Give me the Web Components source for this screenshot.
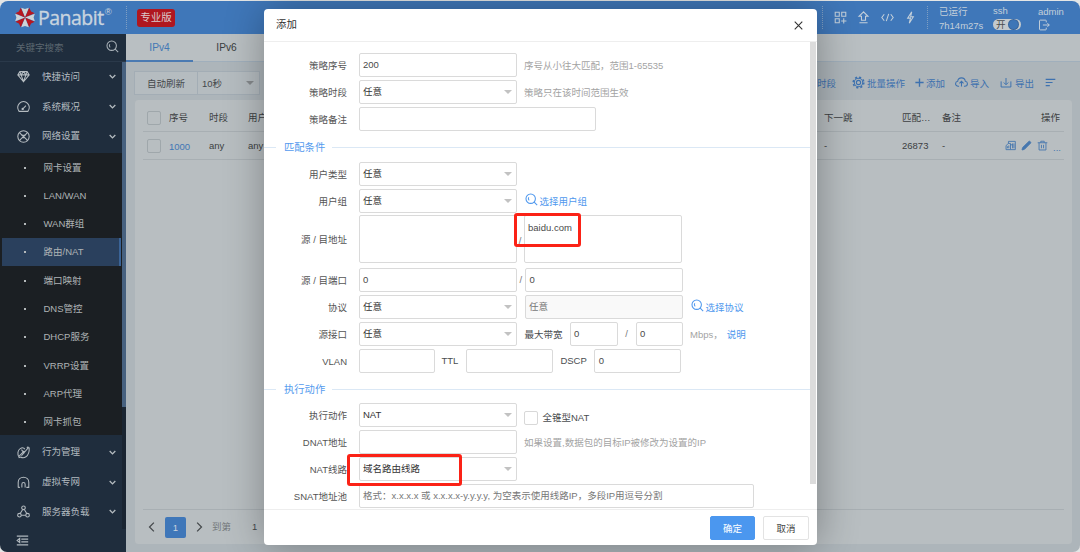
<!DOCTYPE html>
<html lang="zh-CN">
<head>
<meta charset="utf-8">
<title>Panabit</title>
<style>
  html, body { margin: 0; padding: 0; }
  body {
    width: 1080px;
    height: 552px;
    overflow: hidden;
    background: #e4e6e6;
    font: 9.5px/14px "Liberation Sans", "Noto Sans CJK SC", sans-serif;
    color: #4a4d50;
  }
</style>
</head>
<body>
<panabit-app></panabit-app>

<script>
const ICONS = {
  search: '<circle cx="7" cy="7" r="5.8"/><path d="M11.300 11.300l3.700 3.700M4.600 5.200c-.8 1.400-.5 3 .6 4"/>',
  gem: '<path d="M3.5 2h9L15 6l-7 8.5L1 6zM1 6h14M5 6l3 8 3-8M3.5 2L5 6l3-4 3 4 1.5-4"/>',
  gauge: '<path d="M2.600 14C.4 11 .5 7 3 4.200c2.800-3 7.200-3 10 0 2.500 2.800 2.600 6.800.4 9.800zM7.500 10.500L11 7"/><circle cx="7" cy="11" r=".8"/>',
  net: '<circle cx="8" cy="8" r="7"/><path d="M3 3.200l2.500 2.600 5 4.600L13 13M13 3l-2.500 2.800-5 4.600L3 13M6 6.500h4M6 9.500h4" /><path d="M5.500 5.800L8 8l2.500-2.200"/>',
  behave: '<path d="M2.500 13.500C0 10 1 5 4 3.200 7 1.400 9 2.500 9.500 4M5.500 4.500L9 9M5.500 12L14 2l1 .3c.3 5-1.200 9-4 11-2.500 1.700-5 1.200-6.500.2L2 14.500M2 13L9 6M12 2l2-1"/>',
  vpn: '<path d="M1.500 14V7.800C1.500 4 4.300 1.500 8 1.500S14.500 4 14.500 7.800V14h-3M1.500 14h2M6 14v-3.800C6 8.800 6.800 8 8 8s2 .8 2 2.200V14"/>',
  nodes: '<circle cx="8" cy="3.500" r="2.200"/><circle cx="3" cy="12.500" r="2.200"/><circle cx="13" cy="12.500" r="2.200"/><path d="M7 5.500L4 10.500M9 5.500l3 5M5.200 12.500h5.600"/>',
  down: '<path d="M3 5.500l5 5 5-5"/>',
  left: '<path d="M11 1L4 8l7 7"/>',
  right: '<path d="M5 1l7 7-7 7"/>',
  close: '<path d="M2.500 2.500l11 11M13.500 2.500l-11 11"/>',
  fold: '<path d="M1 2.500h14M6.500 6.200H15M6.500 9.800H15M1 13.500h14M4.500 5.500L1.500 8l3 2.500z"/>',
  grid: '<path d="M1.500 1.500h5v5h-5zM9.500 1.500h5v5h-5zM1.500 9.500h5v5h-5zM12 9v6.500M8.800 12.200h6.500"/>',
  upload: '<path d="M8 1L2.500 6.500H5.500V11.500h5V6.500h3zM3 14.500h10"/>',
  code: '<path d="M4 4L1 8l3 4M12 4l3 4-3 4M9.500 3.500l-3 9"/>',
  bolt: '<path d="M9.500 1L4.500 8.800h3.500L6.500 15l5-8H8.200z"/>',
  logout: '<path d="M11 4.500V2.500C11 1.800 10.700 1.500 10 1.500H3C2.300 1.500 2 1.800 2 2.500v11c0 .7.300 1 1 1h7c.7 0 1-.3 1-1v-2M6.500 8h8.500M12.500 5.500L15 8l-2.500 2.500"/>',
  gear: '<circle cx="8" cy="8" r="2.600"/><circle cx="8" cy="8" r="5.200"/><circle cx="8" cy="8" r="6.600" stroke-width="1.800" stroke-dasharray="2.600 2.584"/>',
  plus: '<path d="M8 2v12M2 8h12" stroke-width="2"/>',
  cloud: '<path d="M5 12.500H4c-2 0-3.300-1.400-3.300-3.100S2 6.600 3.300 6.400C3.600 4 5.500 2.300 8 2.300s4.400 1.700 4.700 4.100c1.500.2 2.600 1.400 2.600 3s-1.300 3.100-3.300 3.100h-1M8 13V7M5.500 9L8 6.500 10.500 9"/>',
  export: '<path d="M1.500 6.500v7.500h13V6.500M8 2v8.500M5 8l3 3 3-3"/>',
  lines: '<path d="M1 3.500h14M1 8h10M1 12.500h6" stroke-width="1.700"/>',
  log: '<path d="M5 4.500V2h10v12H8M1.500 14V8.500L4.500 5H8v9zM3.500 9v3M5.500 8v4M11 5v7M13 5v7M8 7h3"/>',
  edit: '<path d="M1.500 14.500l.8-3.500L11.500 2c1-1 3.500 1.300 2.500 2.500L5 13.600z" fill="currentColor"/>',
  trash: '<path d="M1 4h14M5.500 4V1.800h5V4M3 4v10.500h10V4M6.500 7v5M9.500 7v5"/>'
};

function define(name, css, html) {
  customElements.define(name, class extends HTMLElement {
    connectedCallback() {
      if (this.shadowRoot) return;
      const root = this.attachShadow({ mode: "open" });
      const body = typeof html === "function" ? html(this) : html;
      root.innerHTML = `<style>* { box-sizing: border-box; } ${css}</style>${body}`;
    }
  });
}

define("ui-icon", `
  :host { display: inline-block; flex: none; width: 13px; height: 13px; }
  svg { display: block; width: 100%; height: 100%; fill: none; stroke: currentColor; overflow: visible; }
`, el => `<svg viewBox="0 0 16 16" stroke-width="${el.getAttribute("weight") || 1.3}">${ICONS[el.getAttribute("name")]}</svg>`);

/* ---------- header ---------- */

define("app-logo", `
  :host { display: flex; align-items: center; color: #c8d4df; }
  svg { width: 22px; height: 23px; }
  b { margin-left: 2px; font: 400 19.500px/24px "Open Sans", "Noto Sans", sans-serif; letter-spacing: -.5px; -webkit-text-stroke: .35px #c8d4df; }
  sup { align-self: flex-start; margin: 1px 0 0 1px; font-size: 9.500px; line-height: 10px; }
`, () => {
  let blades = "";
  for (let i = 0; i < 8; i++) {
    blades += `<path fill="${i % 2 ? "#b8171f" : "#ced3d6"}" transform="rotate(${i * 45} 12 12)" d="M12 12L7.800 1.300 12 2.600l4.200-1.300z"/>`;
  }
  return `<svg viewBox="0 0 24 24">${blades}</svg><b>Panabit</b><sup>®</sup>`;
});

define("ui-switch", `
  :host { display: flex; align-items: center; box-sizing: border-box; width: 28px; height: 11px; border-radius: 6px; background: #c5cacd; color: #4a4d50; font-size: 9.500px; line-height: 11px; }
  span { margin-left: 3px; }
  i { flex: none; margin-left: auto; width: 9px; height: 9px; margin-right: 3px; border-radius: 50%; background: #3e76b7; box-shadow: 0 0 0 1px #38659c; }
`, `<span><slot></slot></span><i></i>`);

define("app-header", `
  :host { display: flex; align-items: center; height: 33px; background: #3f77b9; color: #c3cfda; border-radius: 8px 8px 0 0; }
  app-logo { width: 112px; margin-left: 14px; }
  .dots { width: 0; height: 23px; border-left: 1px dotted #7f9fc3; }
  .badge { margin-left: 10px; width: 38px; height: 18px; border-radius: 3px; background: #b0171f; color: #d9c9cb; font-size: 10.500px; line-height: 17px; text-align: center; }
  .right { display: flex; align-items: center; margin-left: auto; height: 100%; }
  .icons { display: flex; gap: 10.300px; margin: 0 10px 0 11px; }
  .col { width: 54px; line-height: 14px; white-space: nowrap; }
  ui-switch { margin-top: 1px; }
  .col ui-icon { display: block; width: 12px; height: 12px; margin: 0 0 0; }
`, `
  <app-logo></app-logo>
  <span class="dots"></span>
  <span class="badge">专业版</span>
  <div class="right">
    <span class="dots"></span>
    <div class="icons">
      <ui-icon name="grid"></ui-icon><ui-icon name="upload"></ui-icon>
      <ui-icon name="code"></ui-icon><ui-icon name="bolt"></ui-icon>
    </div>
    <span class="dots"></span>
    <div class="col" style="margin-left:11px;margin-top:2px">已运行<br>7h14m27s</div>
    <div class="col" style="width:45px;margin-top:-1px">ssh<ui-switch>开</ui-switch></div>
    <div class="col" style="width:42px;margin-top:1px">admin<ui-icon name="logout"></ui-icon></div>
  </div>
`);

/* ---------- sidebar ---------- */

define("menu-item", `
  :host { display: flex; align-items: center; height: 29.800px; padding: 0 5px 0 17px; color: #b4bbc0; }
  span { flex: 1; margin-left: 12px; }
  .arrow { width: 9px; height: 9px; }
`, el => `<ui-icon name="${el.getAttribute("icon")}"></ui-icon><span><slot></slot></span><ui-icon class="arrow" name="down" weight="2.4"></ui-icon>`);

define("sub-item", `
  :host { display: flex; align-items: center; height: 28.300px; padding-left: 24px; color: #aeb3b5; }
  :host([active]) { height: 27.300px; margin: 0 1px 1px 2px; padding-left: 22px; background: #2a405d; border-right: 2px solid #3a6396; }
  i { width: 2px; height: 2px; margin-right: 17.500px; background: #b4b9bb; }
`, `<i></i><slot></slot>`);

define("app-sidebar", `
  :host { display: flex; flex-direction: column; width: 126px; flex: none; background: #1f2d3d; border-radius: 0 0 0 7px; overflow: hidden; }
  .search { display: flex; align-items: center; height: 28px; padding: 0 7px 0 16px; border-bottom: 1px solid #2a394a; color: #5c6770; }
  .search ui-icon { margin: -3px 0 0 auto; color: #a7b0b7; }
  .body { display: flex; height: 467px; }
  nav { width: 121.500px; }
  .sub { height: 282px; margin-top: 2px; margin-bottom: 2px; background: #1b1f23; overflow: hidden; }
  .bar { flex: 1; background: #1a2532; }
  .bar i { display: block; height: 345px; background: #47617f; }
  .fold { margin: 5px 0 0 16px; color: #b0b8be; }
`, `
  <div class="search">关键字搜索<ui-icon name="search"></ui-icon></div>
  <div class="body">
    <nav>
      <menu-item icon="gem">快捷访问</menu-item>
      <menu-item icon="gauge">系统概况</menu-item>
      <menu-item icon="net">网络设置</menu-item>
      <div class="sub">
        <sub-item>网卡设置</sub-item>
        <sub-item>LAN/WAN</sub-item>
        <sub-item>WAN群组</sub-item>
        <sub-item active>路由/NAT</sub-item>
        <sub-item>端口映射</sub-item>
        <sub-item>DNS管控</sub-item>
        <sub-item>DHCP服务</sub-item>
        <sub-item>VRRP设置</sub-item>
        <sub-item>ARP代理</sub-item>
        <sub-item>网卡抓包</sub-item>
      </div>
      <menu-item icon="behave">行为管理</menu-item>
      <menu-item icon="vpn">虚拟专网</menu-item>
      <menu-item icon="nodes">服务器负载</menu-item>
    </nav>
    <div class="bar"><i></i></div>
  </div>
  <ui-icon class="fold" name="fold" weight="1.5"></ui-icon>
`);

/* ---------- page behind the dialog ---------- */

define("app-tabs", `
  :host { display: flex; height: 28px; background: #b9bfc2; border-bottom: 1px solid #a0afbc; font-size: 10.200px; line-height: 28px; text-align: center; color: #3a3d40; }
  span { width: 67px; height: 28px; }
  .on { color: #4277b5; border-bottom: 2px solid #4a7ab2; }
`, `<span class="on">IPv4</span><span>IPv6</span>`);

define("app-toolbar", `
  :host { display: flex; align-items: center; height: 24px; color: #3d71af; }
  .refresh { display: flex; width: 126px; height: 24px; border: 1px solid #a3adb5; background: #b5bcc0; color: #45494c; line-height: 23px; }
  .refresh span { width: 63px; padding-left: 12px; border-right: 1px solid #a3adb5; }
  .refresh b { flex: 1; padding-left: 4px; font-weight: 400; }
  .refresh i { margin: 9px 5px 0 0; height: 0; border: 4.500px solid transparent; border-top-color: #85898c; border-bottom: 0; }
  .acts { display: flex; align-items: center; margin-left: auto; padding-right: 18px; white-space: nowrap; }
  .acts ui-icon { margin: -3px 2px 0 0; }
  .acts span { display: flex; align-items: center; margin: 2px 0 0 11px; }
`, `
  <div class="refresh"><span>自动刷新</span><b>10秒</b><i></i></div>
  <div class="acts">
    <span>时段</span>
    <span style="margin-left:16px"><ui-icon name="gear"></ui-icon>批量操作</span>
    <span style="margin-left:9px"><ui-icon name="plus" style="width:11px;height:11px;margin-right:1px"></ui-icon>添加</span>
    <span style="margin-left:10px"><ui-icon name="cloud"></ui-icon>导入</span>
    <span><ui-icon name="export" style="width:12px;margin-right:3px"></ui-icon>导出</span>
    <span><ui-icon name="lines" style="width:11px;height:11px;margin-right:-1px"></ui-icon></span>
  </div>
`);

define("ui-check", `
  :host { display: block; width: 14px; height: 14px; border: 1px solid var(--line, #9fa7ab); border-radius: 2px; box-sizing: border-box; }
`, ``);

define("policy-table", `
  :host { display: flex; flex-direction: column; flex: 1; padding: 4px 8px 0; border: 1px solid #adb5ba; border-radius: 4px; background: #b8bec1; color: #3c3f42; }
  .row { display: grid; grid-template-columns: 22px 40px 39px 576px 78px 40px 50px 1fr; align-items: center; height: 28px; padding: 0 4px; border-bottom: 1px solid #a8afb3; white-space: nowrap; }
  .row:first-child span { padding-top: 1px; }
  .row > :last-child { justify-self: end; }
  .ops { display: flex; align-items: center; gap: 4px; margin-right: -1px; color: #4576ae; }
  .ops ui-icon { width: 11px; height: 11px; margin-right: 1px; }
  a { color: #4277b5; padding-top: 2px; }
  .pager { display: flex; align-items: center; height: 35px; margin-top: auto; border-top: 1px solid #a8afb3; color: #45494c; }
  .pager ui-icon { width: 10px; height: 10px; }
  .pager b { width: 21px; height: 21px; margin: 0 8px; border-radius: 2px; background: #3f77b9; color: #c9d4df; font-weight: 400; line-height: 21px; text-align: center; }
  .pager em { margin: 0 21px 0 8px; font-style: normal; color: #74797c; }
`, `
  <div class="row"><ui-check></ui-check><span>序号</span><span>时段</span><span>用户</span><span>下一跳</span><span>匹配…</span><span>备注</span><span>操作</span></div>
  <div class="row"><ui-check></ui-check><a>1000</a><span>any</span><span>any</span><span>-</span><span>26873</span><span>-</span>
    <div class="ops"><ui-icon name="log"></ui-icon><ui-icon name="edit"></ui-icon><ui-icon name="trash"></ui-icon><span style="margin-top:4px">...</span></div></div>
  <div class="pager"><ui-icon name="left" weight="2" style="margin-left:4px"></ui-icon><b>1</b><ui-icon name="right" weight="2"></ui-icon><em>到第</em><span>1</span></div>
`);

/* ---------- form controls ---------- */

define("ui-input", `
  :host { display: block; flex: none; box-sizing: border-box; width: 158px; height: 24px; padding: 0 3.500px; border: 1px solid #dadada; border-radius: 2px; background: #fff; color: #4a4a4a; line-height: 22px; white-space: nowrap; }
  :host([disabled]) { background: #f9f9f9; color: #777; }
  :host([area]) { height: 48px; line-height: 23px; }
`, `<slot></slot>`);

define("ui-select", `
  :host { display: flex; flex: none; align-items: center; justify-content: space-between; box-sizing: border-box; width: 158px; height: 24px; padding: 0 4px 0 3.500px; border: 1px solid #dadada; border-radius: 2px; background: #fff; color: #333; }
  i { border: 4.500px solid transparent; border-top-color: #c2c2c2; border-bottom: 0; }
`, `<span><slot></slot></span><i></i>`);

define("form-row", `
  :host { display: flex; align-items: center; height: 24px; margin-bottom: 3px; white-space: nowrap; }
  label { flex: none; width: 83px; margin: 1px 11.500px 0 0; text-align: right; color: #555; }
`, el => `<label>${el.getAttribute("label")}</label><slot></slot>`);

define("form-legend", `
  :host { display: flex; align-items: center; height: 28px; color: #559bee; font-size: 10.300px; }
  :host::before, :host::after { content: ""; height: 1px; background: #dbe8f5; }
  :host::before { width: 12px; margin-right: 8px; }
  :host::after { flex: 1; margin-left: 7px; }
`, `<slot></slot>`);

define("pick-link", `
  :host { display: flex; align-items: center; margin-left: 8px; color: #4f98ee; }
  ui-icon { margin: -4px 2px 0 0; }
  span { padding-top: 2px; }
`, `<ui-icon name="search"></ui-icon><span><slot></slot></span>`);

define("ui-button", `
  :host { display: block; box-sizing: border-box; width: 46px; height: 24px; border: 1px solid #e3e3e3; border-radius: 2px; background: #fff; color: #444; line-height: 23px; text-align: center; }
  :host([primary]) { width: 45px; border-color: #4b97ef; background: #4b97ef; color: #fff; }
`, `<slot></slot>`);

define("policy-dialog", `
  :host { display: flex; flex-direction: column; position: absolute; left: 264px; top: 9px; width: 553px; height: 536px; border-radius: 4px; background: #fff; box-shadow: 1px 1px 40px rgba(0, 0, 0, .32); }
  header { display: flex; align-items: center; justify-content: space-between; height: 33px; padding: 0 13px 0 12px; border-bottom: 1px solid #eee; font-size: 10.400px; color: #333; }
  header ui-icon { width: 11px; height: 11px; }
  .scroll { display: flex; height: 468px; border-bottom: 1px solid #eee; }
  form { position: relative; width: 546px; padding-top: 11px; }
  .bar { width: 6px; height: 442px; background: #dcdcdc; }
  footer { display: flex; align-items: center; justify-content: flex-end; gap: 8px; height: 35px; padding-right: 8px; }
  .tip { margin: 1px 0 0 7.500px; color: #a3a3a3; }
  .slash { width: 8.500px; text-align: center; color: #777; }
  .mark { position: absolute; border: 3px solid #fb2216; border-radius: 3px; }
  .link { color: #4f98ee; margin: 1px 0 0 4px; }
`, `
  <header>添加<ui-icon name="close" weight="1.6"></ui-icon></header>
  <div class="scroll">
    <form>
      <form-row label="策略序号"><ui-input>200</ui-input><span class="tip">序号从小往大匹配，范围1-65535</span></form-row>
      <form-row label="策略时段"><ui-select>任意</ui-select><span class="tip">策略只在该时间范围生效</span></form-row>
      <form-row label="策略备注"><ui-input style="width:237px"></ui-input></form-row>
      <form-legend style="height:27px;margin-bottom:1px">匹配条件</form-legend>
      <form-row label="用户类型"><ui-select>任意</ui-select></form-row>
      <form-row label="用户组" style="margin-bottom:2px"><ui-select>任意</ui-select><pick-link>选择用户组</pick-link></form-row>
      <form-row label="源 / 目地址" style="height:48px;margin-bottom:5px"><ui-input area></ui-input><span class="slash" style="width:7px;padding-top:4px">/</span><ui-input area>baidu.com</ui-input></form-row>
      <form-row label="源 / 目端口"><ui-input>0</ui-input><span class="slash">/</span><ui-input>0</ui-input></form-row>
      <form-row label="协议"><ui-select>任意</ui-select><ui-input disabled style="margin-left:8px">任意</ui-input><pick-link>选择协议</pick-link></form-row>
      <form-row label="源接口"><ui-select>任意</ui-select><span style="margin:1px 7px 0 8px">最大带宽</span><ui-input style="width:48px">0</ui-input><span class="slash" style="width:18px">/</span><ui-input style="width:47px">0</ui-input><span class="tip">Mbps，</span><span class="link">说明</span></form-row>
      <form-row label="VLAN"><ui-input style="width:76px"></ui-input><span style="margin:0 8px 0 7px">TTL</span><ui-input style="width:87px"></ui-input><span style="margin:0 7.500px 0 7px">DSCP</span><ui-input style="width:87px">0</ui-input></form-row>
      <form-legend style="height:27px">执行动作</form-legend>
      <form-row label="执行动作"><ui-select>NAT</ui-select><ui-check style="--line:#d8d8d8;margin:5px 5px 0 7px"></ui-check><span style="margin-top:6px">全锥型NAT</span></form-row>
      <form-row label="DNAT地址"><ui-input></ui-input><span class="tip">如果设置,数据包的目标IP被修改为设置的IP</span></form-row>
      <form-row label="NAT线路"><ui-select>域名路由线路</ui-select></form-row>
      <form-row label="SNAT地址池"><ui-input style="width:395px;color:#777">格式：x.x.x.x 或 x.x.x.x-y.y.y.y, 为空表示使用线路IP，多段IP用逗号分割</ui-input></form-row>
      <div class="mark" style="left:250px;top:171px;width:67px;height:34px"></div>
      <div class="mark" style="left:83px;top:412px;width:115px;height:32px"></div>
    </form>
    <div class="bar"></div>
  </div>
  <footer><ui-button primary>确定</ui-button><ui-button>取消</ui-button></footer>
`);

define("panabit-app", `
  :host { display: flex; flex-direction: column; position: relative; width: 1080px; height: 551px; padding-top: 1px; overflow: hidden; }
  .page { display: flex; flex: 1; min-height: 0; }
  main { display: flex; flex: 1; flex-direction: column; background: #adb5ba; border-radius: 0 0 7px 0; }
  .content { display: flex; flex: 1; flex-direction: column; gap: 4px; padding: 9px 7px 7px 8px; }
`, `
  <app-header></app-header>
  <div class="page">
    <app-sidebar></app-sidebar>
    <main>
      <app-tabs></app-tabs>
      <div class="content">
        <app-toolbar></app-toolbar>
        <policy-table></policy-table>
      </div>
    </main>
  </div>
  <policy-dialog></policy-dialog>
`);
</script>
</body>
</html>
